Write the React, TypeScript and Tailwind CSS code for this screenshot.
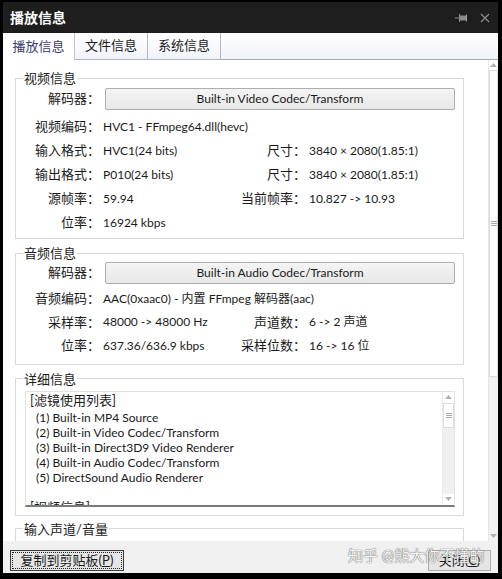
import React from 'react'

const font = { fontFamily: 'Lato, "Noto Sans CJK SC", sans-serif' }

function Row({ label, value, label2, value2, h = 'h-[24px]' }: { label: string; value: string; label2?: string; value2?: string; h?: string }) {
  return (
    <div className={`flex items-center whitespace-nowrap ${h}`}>
      <span className="w-[84px] shrink-0 text-right">{label}</span>
      <span className="w-[120px] shrink-0 pl-[3px] text-[12px]">{value}</span>
      {label2 && (
        <>
          <span className="w-[86px] shrink-0 text-right">{label2}</span>
          <span className="pl-[3px] text-[12px]">{value2}</span>
        </>
      )}
    </div>
  )
}

function DecoderRow({ text }: { text: string }) {
  return (
    <div className="flex h-[22px] items-center">
      <span className="w-[84px] shrink-0 text-right">解码器：</span>
      <div className="ml-[5px] mr-[8px] flex h-[22px] flex-1 items-center justify-center rounded-[2px] border border-[#adadad] bg-gradient-to-b from-[#f4f4f4] to-[#e8e8e8] text-[12px]">
        {text}
      </div>
    </div>
  )
}

function ArrowUp() {
  return (
    <svg width="7" height="4" viewBox="0 0 7 4"><path d="M0 4 L3.5 0 L7 4 Z" fill="#b0b0b0" /></svg>
  )
}

function ArrowDown() {
  return (
    <svg width="7" height="4" viewBox="0 0 7 4"><path d="M0 0 L3.5 4 L7 0 Z" fill="#b0b0b0" /></svg>
  )
}

function Grip() {
  return (
    <svg width="6" height="5" viewBox="0 0 6 5">
      <path d="M0 0.5 H6 M0 2.5 H6 M0 4.5 H6" stroke="#a8a8a8" strokeWidth="1" />
    </svg>
  )
}

const filters = [
  '(1) Built-in MP4 Source',
  '(2) Built-in Video Codec/Transform',
  '(3) Built-in Direct3D9 Video Renderer',
  '(4) Built-in Audio Codec/Transform',
  '(5) DirectSound Audio Renderer',
]

export default function App() {
  return (
    <div className="flex h-[579px] w-[502px] flex-col bg-black pb-[6px] pl-[3px] pr-[4px] pt-[2px] text-[13px] text-[#1a1a1a]" style={font}>
      {/* title bar */}
      <div className="flex h-[31px] shrink-0 items-center bg-[#1e1e1e] pl-[7px] pr-[8px]">
        <span className="text-[14px] font-bold text-white">播放信息</span>
        <div className="ml-auto flex items-center gap-[12px]">
          <svg width="13" height="10" viewBox="0 0 13 10">
            <path d="M0 5 H4" stroke="#8a8a8a" strokeWidth="1" />
            <path d="M4.5 1 V9" stroke="#8a8a8a" strokeWidth="1" />
            <rect x="5" y="2.5" width="6" height="5" fill="#8a8a8a" />
            <path d="M11.5 1.5 V8.5" stroke="#a0a0a0" strokeWidth="1" />
          </svg>
          <svg width="10" height="10" viewBox="0 0 10 10">
            <path d="M1 1 L9 9 M9 1 L1 9" stroke="#8a8a8a" strokeWidth="1.2" />
          </svg>
        </div>
      </div>

      {/* tabs */}
      <div className="flex h-[27px] shrink-0 bg-gradient-to-b from-white to-[#f1f3fb]">
        <div className="flex w-[72px] items-center justify-center border-r border-[#c4c4c8] bg-white text-[#3d3d70]">播放信息</div>
        <div className="flex w-[73px] items-center justify-center border-b border-r border-[#b4b4bc]">文件信息</div>
        <div className="flex w-[73px] items-center justify-center border-b border-r border-[#b4b4bc]">系统信息</div>
        <div className="flex-1 border-b border-[#a8a8b0]" />
      </div>

      {/* content */}
      <div className="flex h-[481px] shrink-0 bg-white">
        <div className="flex flex-1 flex-col overflow-hidden pl-[12px] pr-[24px] pt-[10px]">
          <fieldset className="border border-[#d9d9d9] pb-[3px] pt-[2px]">
            <legend className="ml-[7px] px-[1px] leading-[16px]">视频信息</legend>
            <DecoderRow text="Built-in Video Codec/Transform" />
            <div className="mt-[5px]">
              <Row label="视频编码：" value="HVC1 - FFmpeg64.dll(hevc)" />
              <Row label="输入格式：" value="HVC1(24 bits)" label2="尺寸：" value2="3840 × 2080(1.85:1)" />
              <Row label="输出格式：" value="P010(24 bits)" label2="尺寸：" value2="3840 × 2080(1.85:1)" />
              <Row label="源帧率：" value="59.94" label2="当前帧率：" value2="10.827 -> 10.93" />
              <Row label="位率：" value="16924 kbps" />
            </div>
          </fieldset>

          <fieldset className="mt-[6px] border border-[#d9d9d9] pb-[6px] pt-[1px]">
            <legend className="ml-[7px] px-[1px] leading-[16px]">音频信息</legend>
            <DecoderRow text="Built-in Audio Codec/Transform" />
            <div className="mt-[3px]">
              <Row h="h-[23.5px]" label="音频编码：" value="AAC(0xaac0) - 内置 FFmpeg 解码器(aac)" />
              <Row h="h-[23.5px]" label="采样率：" value="48000 -> 48000 Hz" label2="声道数：" value2="6 -> 2 声道" />
              <Row h="h-[23.5px]" label="位率：" value="637.36/636.9 kbps" label2="采样位数：" value2="16 -> 16 位" />
            </div>
          </fieldset>

          <fieldset className="mt-[6px] border border-[#d9d9d9] pb-[8px] pt-[4px]">
            <legend className="ml-[7px] px-[1px] leading-[16px]">详细信息</legend>
            <div className="ml-[9px] mr-[8px] flex h-[116px] border border-[#e2e2e2] border-b-[2px] border-b-[#7a7a7a]">
              <div className="flex-1 overflow-hidden whitespace-nowrap pl-[4px] pt-[1px] leading-[15px]">
                <div className="mb-[2px]">[滤镜使用列表]</div>
                {filters.map((f, i) => (
                  <div key={i} className="pl-[6px] text-[12px]">{f}</div>
                ))}
                <div>&nbsp;</div>
                <div>[视频信息]</div>
              </div>
              <div className="flex w-[12px] flex-col border-l border-[#ececec] bg-[#f0f0f0]">
                <div className="flex h-[11px] items-center justify-center bg-white"><ArrowUp /></div>
                <div className="flex h-[25px] items-center justify-center border border-[#dcdcdc] bg-white"><Grip /></div>
                <div className="flex-1" />
                <div className="flex h-[11px] items-center justify-center bg-white"><ArrowDown /></div>
              </div>
            </div>
          </fieldset>

          <fieldset className="mt-[5px] h-[40px] shrink-0 border border-[#d9d9d9]">
            <legend className="ml-[7px] px-[1px] leading-[16px]">输入声道/音量</legend>
          </fieldset>
        </div>

        {/* page scrollbar */}
        <div className="flex w-[10px] flex-col border-l border-[#e6e6e6] bg-[#f2f2f2]">
          <div className="flex h-[10px] items-center justify-center bg-white"><ArrowUp /></div>
          <div className="flex h-[307px] items-center justify-center border border-[#dadada] bg-white"><Grip /></div>
          <div className="flex-1" />
          <div className="flex h-[10px] items-center justify-center"><ArrowDown /></div>
        </div>
      </div>

      {/* bottom bar */}
      <div className="relative flex h-[32px] shrink-0 items-start bg-[#f0f0f0] pl-[7px] pr-[7px] pt-[9px]">
        <div className="flex h-[21px] w-[114px] items-center justify-center border border-[#3a3a3a] bg-[#e6e6e6] p-[1px]">
          <div className="flex h-full w-full items-center justify-center border border-dotted border-[#222]">
            复制到剪贴板(<span className="underline">P</span>)
          </div>
        </div>
        <div className="ml-auto flex h-[21px] w-[63px] items-center justify-center border border-[#adadad] bg-[#e5e5e5]">
          关闭(<span className="underline">C</span>)
        </div>
        <div className="pointer-events-none absolute left-[345px] top-[4px] whitespace-nowrap text-[15px] leading-[20px] text-[#f4f4f4] [text-shadow:0_0_1px_#6a6a6a,0_0_1px_#6a6a6a]">
          知乎 @熊大你不懂的
        </div>
      </div>
    </div>
  )
}
